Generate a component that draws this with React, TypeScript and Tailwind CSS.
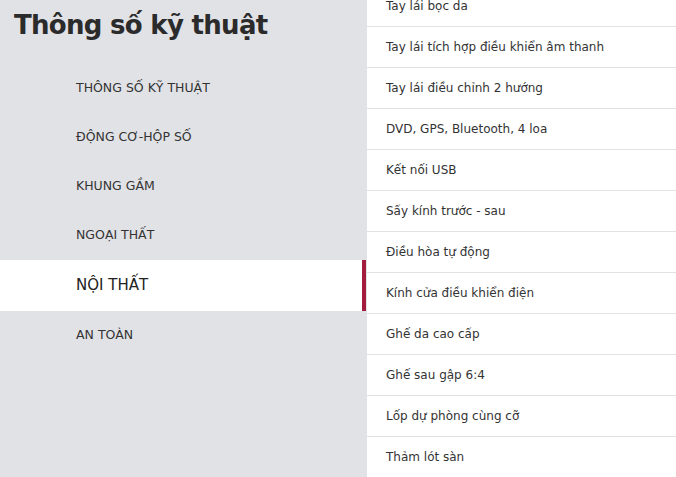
import React from "react";

const menu = [
  "THÔNG SỐ KỸ THUẬT",
  "ĐỘNG CƠ-HỘP SỐ",
  "KHUNG GẦM",
  "NGOẠI THẤT",
  "NỘI THẤT",
  "AN TOÀN",
];

const specs = [
  "Tay lái bọc da",
  "Tay lái tích hợp điều khiển âm thanh",
  "Tay lái điều chỉnh 2 hướng",
  "DVD, GPS, Bluetooth, 4 loa",
  "Kết nối USB",
  "Sấy kính trước - sau",
  "Điều hòa tự động",
  "Kính cửa điều khiển điện",
  "Ghế da cao cấp",
  "Ghế sau gập 6:4",
  "Lốp dự phòng cùng cỡ",
  "Thảm lót sàn",
];

export default function App() {
  return (
    <div
      className="flex h-[477px] w-[676px] overflow-hidden bg-white text-[#333333]"
      style={{ fontFamily: '"DejaVu Sans", Verdana, sans-serif' }}
    >
      <aside className="flex w-[367px] shrink-0 flex-col bg-[#e1e2e6]">
        <h1 className="pl-[14px] pt-[9px] text-[26px] font-bold leading-[32px] text-[#2b2b2b] tracking-[-0.7px]">
          Thông số kỹ thuật
        </h1>
        <ul className="mt-[23px] flex flex-col">
          {menu.map((m, i) =>
            i === 4 ? (
              <li
                key={m}
                className="flex h-[51px] items-center bg-white pl-[76px] text-[15px] text-[#222] border-r-[4px] border-[#a31c3d] mr-[1px]"
              >
                {m}
              </li>
            ) : (
              <li
                key={m}
                className="flex h-[49px] items-center pl-[76px] text-[12.5px] text-[#333]"
              >
                {m}
              </li>
            )
          )}
        </ul>
      </aside>
      <main className="flex-1 overflow-hidden">
        <ul className="-mt-[14px] flex flex-col">
          {specs.map((s) => (
            <li
              key={s}
              className="flex h-[41px] items-center border-b border-[#e2e2e2] pl-[19px] text-[12px] text-[#333]"
            >
              {s}
            </li>
          ))}
        </ul>
      </main>
    </div>
  );
}
